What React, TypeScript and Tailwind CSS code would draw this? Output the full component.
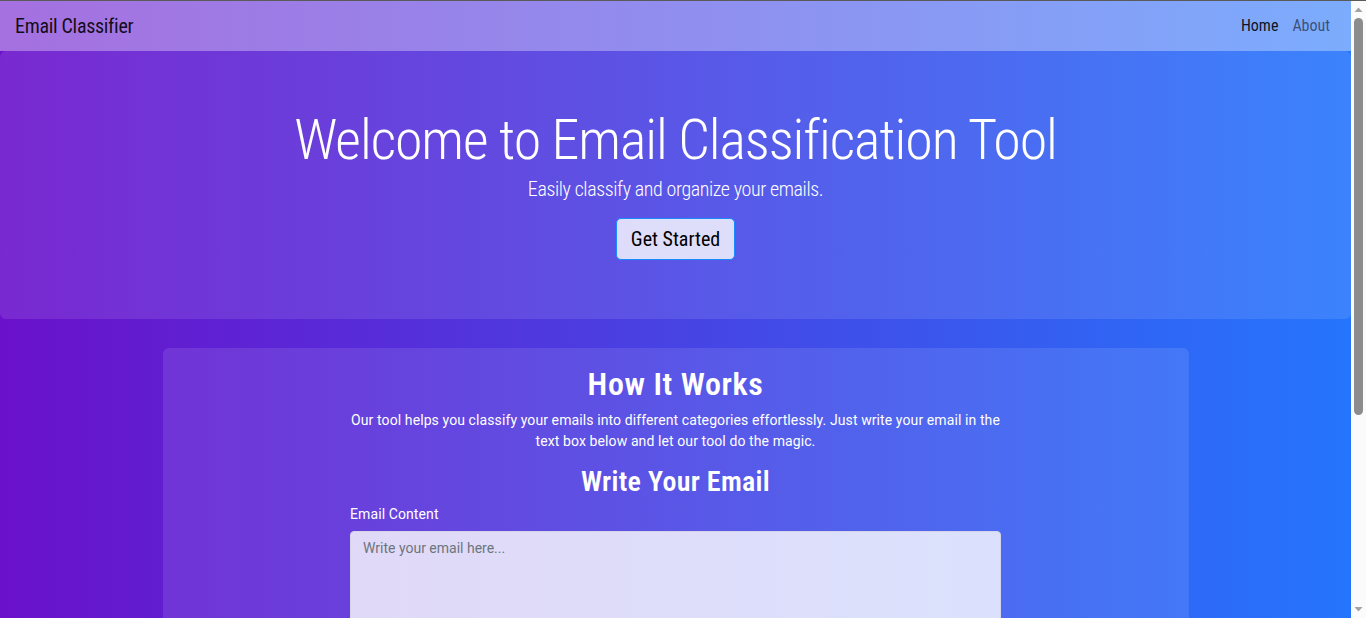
import React from "react";

const cond = "[font-stretch:87.5%]";

export default function App() {
  return (
    <div
      className="flex h-[618px] overflow-hidden border-t border-[#5a5a5a] bg-[#fbfbfb]"
      style={{ fontFamily: "Roboto, 'Open Sans', sans-serif" }}
    >
      <main className="h-[617px] flex-1 overflow-hidden bg-[linear-gradient(to_right,#6a11cb,#2575fc)] text-white">
        <nav className="flex h-[50px] items-center justify-between bg-white/40 px-[15px]">
          <span className={`${cond} text-[20px] tracking-[-0.3px] text-black/90`}>Email Classifier</span>
          <div className={`${cond} flex items-center gap-[14px] pr-[6px] text-[16px]`}>
            <span className="text-black/90">Home</span>
            <span className="text-black/55">About</span>
          </div>
        </nav>
        <section className="rounded-md bg-white/10 pb-[59px] pt-[56px] text-center">
          <h1 className={`${cond} text-[56px] font-light leading-[67px] tracking-[-1.1px]`}>
            Welcome to Email Classification Tool
          </h1>
          <p className={`${cond} text-[20px] font-light leading-[30px] tracking-[-0.4px]`}>
            Easily classify and organize your emails.
          </p>
          <button
            className={`${cond} mt-[14px] h-[42px] rounded-[5px] border border-[#1a8cff] bg-white/80 px-[14px] text-[20px] text-black`}
          >
            Get Started
          </button>
        </section>
        <div className="mx-auto mt-[29px] w-[1026px] rounded-md bg-white/10 pb-[40px] pt-[17px]">
          <div className="mx-auto w-[651px] text-center">
            <h2 className={`${cond} text-[32px] font-semibold leading-[38px] tracking-[0.6px]`}>How It Works</h2>
            <p className="mt-[7px] text-[14px] leading-[21px] tracking-[0.1px]">
              <span className="block whitespace-nowrap">
                Our tool helps you classify your emails into different categories effortlessly. Just write your email in the
              </span>
              <span className="block whitespace-nowrap">text box below and let our tool do the magic.</span>
            </p>
            <h3 className={`${cond} mt-[13px] text-[28px] font-semibold leading-[34px] tracking-[0.3px]`}>
              Write Your Email
            </h3>
            <div className="mt-[5px] text-left">
              <label className="block text-[14px] leading-[21px] tracking-[0.1px]">Email Content</label>
              <textarea
                className="mt-[6px] block h-[200px] w-full resize-none rounded-[4px] border border-[#d5d3e6] bg-white/80 px-[12px] py-[6px] text-[14px] text-black outline-none placeholder:text-[#6c757d]"
                placeholder="Write your email here..."
              />
            </div>
          </div>
        </div>
      </main>
      <div className="flex h-[617px] w-[15px] flex-col items-center">
        <svg width="15" height="17" viewBox="0 0 15 17" className="shrink-0">
          <path d="M3.5 11 L7.5 6.5 L11.5 11 Z" fill="#a3a3a3" />
        </svg>
        <div className="h-[397px] w-[9px] shrink-0 rounded-full bg-[#8c8c8c]" />
        <div className="flex-1" />
        <svg width="15" height="17" viewBox="0 0 15 17" className="shrink-0">
          <path d="M3.5 6 L7.5 10.5 L11.5 6 Z" fill="#a3a3a3" />
        </svg>
      </div>
    </div>
  );
}
